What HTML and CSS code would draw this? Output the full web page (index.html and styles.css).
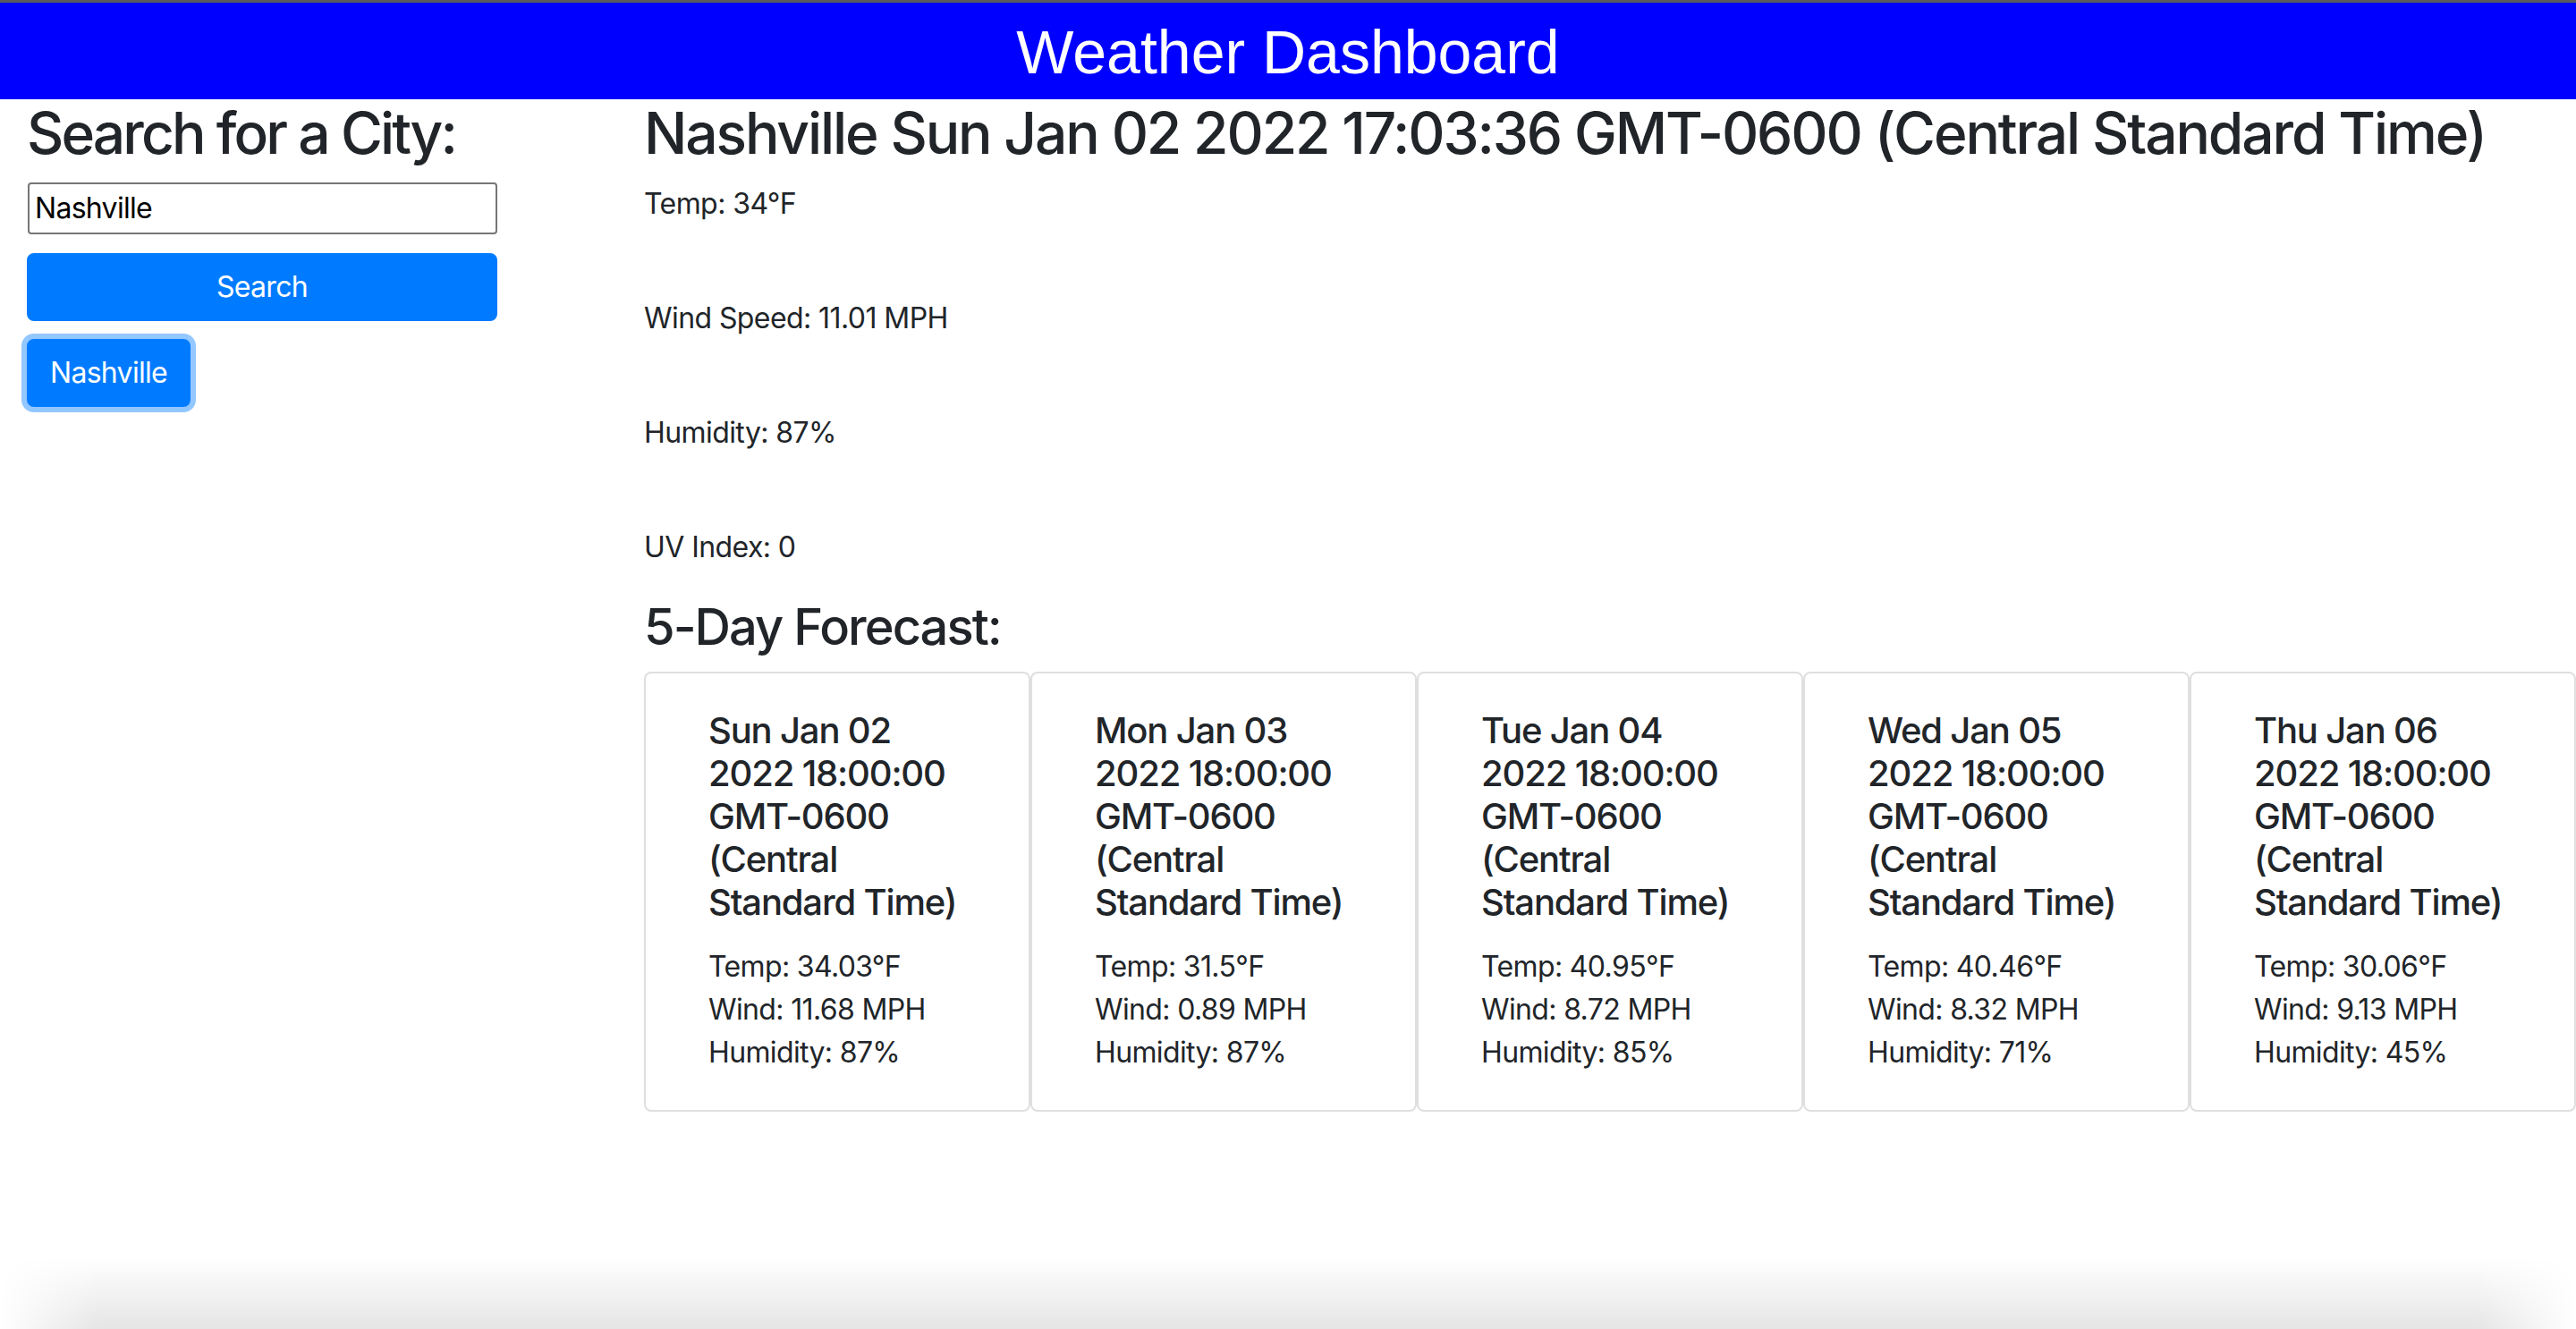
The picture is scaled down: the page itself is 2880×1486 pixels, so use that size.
FILE: index.html
```html
<!DOCTYPE html>
<html lang="en">
<head>
<meta charset="utf-8">
<title>Weather Dashboard</title>
<link rel="stylesheet" href="styles.css">
</head>
<body>
<div class="window">
  <header class="topbar">
    <h1 class="topbar-title">Weather Dashboard</h1>
  </header>
  <div class="layout">
    <aside class="sidebar">
      <h2 class="side-title">Search for a City:</h2>
      <input class="city-input" type="text" value="Nashville">
      <button class="btn btn-search">Search</button>
      <button class="btn btn-city">Nashville</button>
    </aside>
    <main class="main">
      <h2 class="current-title">Nashville Sun Jan 02 2022 17:03:36 GMT-0600 (Central Standard Time)</h2>
      <p class="stat">Temp: 34°F</p>
      <p class="stat">Wind Speed: 11.01 MPH</p>
      <p class="stat">Humidity: 87%</p>
      <p class="stat stat-last">UV Index: 0</p>
      <h3 class="forecast-title">5-Day Forecast:</h3>
      <div class="cards">
        <div class="card">
          <h5 class="card-title">Sun Jan 02<br>2022 18:00:00<br>GMT-0600<br>(Central<br>Standard Time)</h5>
          <p class="card-line">Temp: 34.03°F</p>
          <p class="card-line">Wind: 11.68 MPH</p>
          <p class="card-line">Humidity: 87%</p>
        </div>
        <div class="card">
          <h5 class="card-title">Mon Jan 03<br>2022 18:00:00<br>GMT-0600<br>(Central<br>Standard Time)</h5>
          <p class="card-line">Temp: 31.5°F</p>
          <p class="card-line">Wind: 0.89 MPH</p>
          <p class="card-line">Humidity: 87%</p>
        </div>
        <div class="card">
          <h5 class="card-title">Tue Jan 04<br>2022 18:00:00<br>GMT-0600<br>(Central<br>Standard Time)</h5>
          <p class="card-line">Temp: 40.95°F</p>
          <p class="card-line">Wind: 8.72 MPH</p>
          <p class="card-line">Humidity: 85%</p>
        </div>
        <div class="card">
          <h5 class="card-title">Wed Jan 05<br>2022 18:00:00<br>GMT-0600<br>(Central<br>Standard Time)</h5>
          <p class="card-line">Temp: 40.46°F</p>
          <p class="card-line">Wind: 8.32 MPH</p>
          <p class="card-line">Humidity: 71%</p>
        </div>
        <div class="card">
          <h5 class="card-title">Thu Jan 06<br>2022 18:00:00<br>GMT-0600<br>(Central<br>Standard Time)</h5>
          <p class="card-line">Temp: 30.06°F</p>
          <p class="card-line">Wind: 9.13 MPH</p>
          <p class="card-line">Humidity: 45%</p>
        </div>
      </div>
    </main>
  </div>
  <div class="bottom-shadow"></div>
</div>
</body>
</html>
```

FILE: styles.css
```css
html, body {
  margin: 0;
  padding: 0;
  height: 100%;
}

body {
  font-family: Inter, "Noto Sans", sans-serif;
  color: #212529;
  background: #ffffff;
  overflow: hidden;
}

.window {
  display: flex;
  flex-direction: column;
  min-height: 100vh;
}

.topbar {
  border-top: 3px solid #5b5b5b;
  background: #0000ff;
  padding-top: 21px;
  box-sizing: border-box;
  height: 111px;
  text-align: center;
}

.topbar-title {
  margin: 0;
  font-family: "Liberation Sans", Arial, sans-serif;
  font-weight: 400;
  font-size: 68px;
  line-height: 1;
  color: #ffffff;
}

.layout {
  display: flex;
}

.sidebar {
  flex: 0 0 690px;
  padding-left: 30px;
  display: flex;
  flex-direction: column;
  align-items: flex-start;
}

.side-title {
  margin: 0 0 16px;
  font-size: 64px;
  font-weight: 500;
  line-height: 1.2;
  letter-spacing: -0.045em;
}

.city-input {
  box-sizing: border-box;
  width: 525px;
  height: 58px;
  margin: 0 0 0 1px;
  padding: 0 6px;
  border: 2px solid #767676;
  border-radius: 4px;
  font-family: Inter, "Noto Sans", sans-serif;
  font-size: 32px;
  letter-spacing: -0.022em;
  color: #000000;
  background: #ffffff;
}

.btn {
  box-sizing: border-box;
  height: 76px;
  padding: 0 24px;
  border: 2px solid #007bff;
  border-radius: 8px;
  background: #007bff;
  color: #ffffff;
  font-family: Inter, "Noto Sans", sans-serif;
  font-size: 32px;
  font-weight: 400;
  line-height: 48px;
  letter-spacing: -0.022em;
}

.btn-search {
  width: 526px;
  margin-top: 21px;
}

.btn-city {
  margin-top: 20px;
  box-shadow: 0 0 0 6px rgba(38, 143, 255, 0.5);
}

.main {
  flex: 1;
  min-width: 0;
}

.current-title {
  margin: 0 0 16px;
  font-size: 64px;
  font-weight: 500;
  line-height: 1.2;
  letter-spacing: -0.033em;
  white-space: nowrap;
}

.stat {
  margin: 0 0 80px;
  font-size: 32px;
  line-height: 48px;
  letter-spacing: -0.018em;
}

.stat-last {
  margin-bottom: 32px;
}

.forecast-title {
  margin: 0 0 16px;
  font-size: 56px;
  font-weight: 500;
  line-height: 1.2;
  letter-spacing: -0.035em;
}

.cards {
  display: flex;
}

.card {
  flex: 0 0 432px;
  box-sizing: border-box;
  border: 2px solid #dfdfdf;
  border-radius: 8px;
  padding: 40px 20px 40px 70px;
}

.card-title {
  margin: 0 0 24px;
  font-size: 40px;
  font-weight: 500;
  line-height: 48px;
  letter-spacing: -0.029em;
}

.card-line {
  margin: 0;
  font-size: 32px;
  line-height: 48px;
  letter-spacing: -0.02em;
}

.bottom-shadow {
  margin-top: auto;
  height: 80px;
  background: linear-gradient(to bottom, rgba(0, 0, 0, 0), rgba(0, 0, 0, 0.1));
  -webkit-mask-image: linear-gradient(to right, transparent 0, #000 110px, #000 calc(100% - 110px), transparent 100%);
  mask-image: linear-gradient(to right, transparent 0, #000 110px, #000 calc(100% - 110px), transparent 100%);
}
```
